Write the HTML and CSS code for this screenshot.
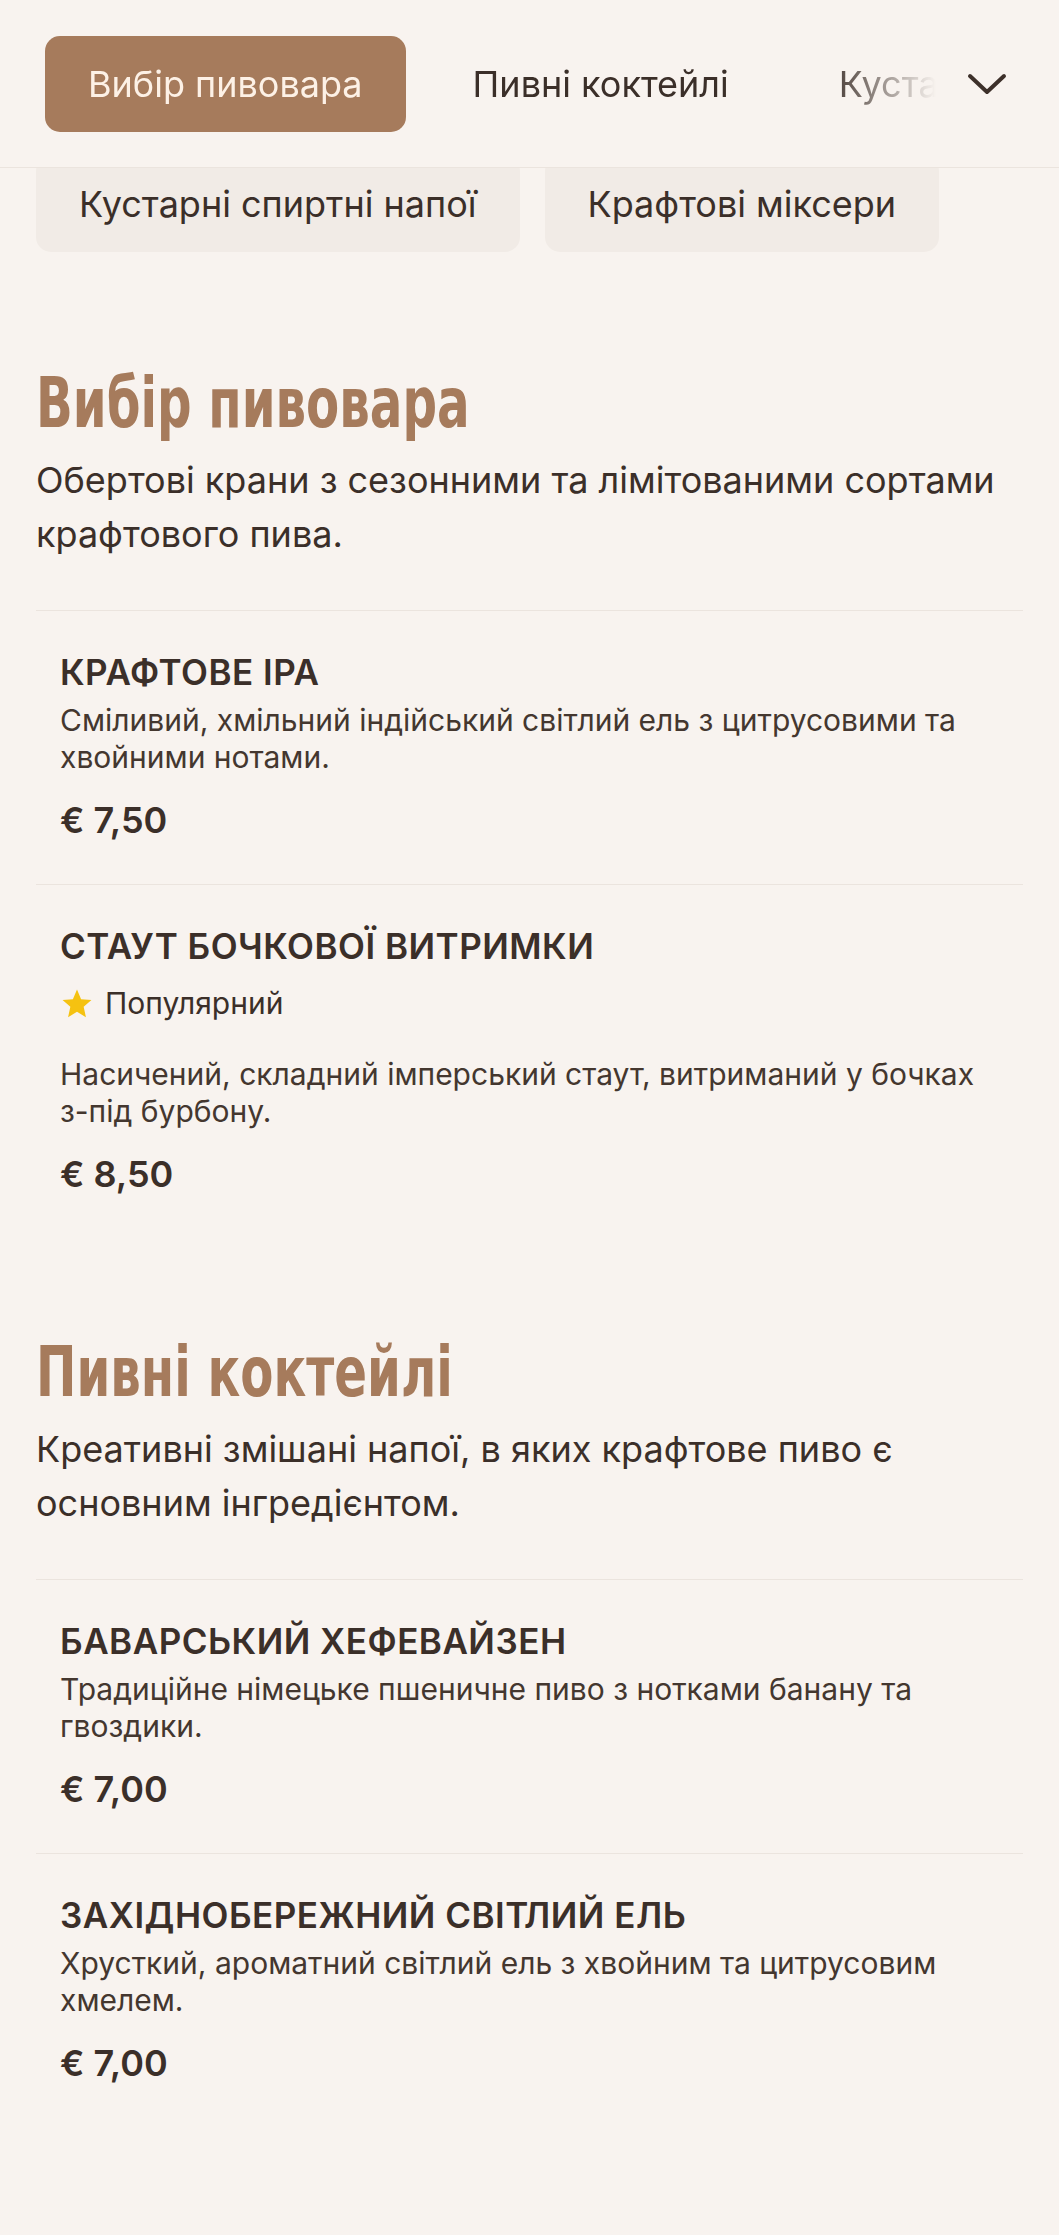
FILE: index.html
```html
<!DOCTYPE html>
<html lang="uk">
<head>
<meta charset="utf-8">
<title>Меню</title>
<link rel="stylesheet" href="styles.css">
</head>
<body>
<header class="header">
  <nav class="tabs">
    <span class="tab tab-active">Вибір пивовара</span>
    <span class="tab">Пивні коктейлі</span>
    <span class="tab">Кустарні спиртні напої</span>
    <span class="tab">Крафтові міксери</span>
  </nav>
  <button class="menu-btn" aria-label="Більше">
    <svg width="40" height="22" viewBox="0 0 40 22" fill="none"><path d="M3 3 L20 19 L37 3" stroke="#3d302a" stroke-width="4" stroke-linecap="round" stroke-linejoin="round"/></svg>
  </button>
</header>
<div class="chips">
  <span class="chip">Кустарні спиртні напої</span>
  <span class="chip">Крафтові міксери</span>
</div>
<main>
  <section class="section">
    <h2 class="section-title">Вибір пивовара</h2>
    <p class="section-desc">Обертові крани з сезонними та лімітованими сортами крафтового пива.</p>
    <div class="items">
      <div class="item">
        <h3 class="item-name">КРАФТОВЕ IPA</h3>
        <p class="item-desc">Сміливий, хмільний індійський світлий ель з цитрусовими та хвойними нотами.</p>
        <div class="item-price">€ 7,50</div>
      </div>
      <div class="item">
        <h3 class="item-name">СТАУТ БОЧКОВОЇ ВИТРИМКИ</h3>
        <div class="tag">
          <svg class="star" width="34" height="34" viewBox="0 0 24 24"><path d="M12 1.8 L14.9 8.6 L22.2 9.2 L16.7 14 L18.3 21.3 L12 17.5 L5.7 21.3 L7.3 14 L1.8 9.2 L9.1 8.6 Z" fill="#f5c211"/></svg>
          <span>Популярний</span>
        </div>
        <p class="item-desc">Насичений, складний імперський стаут, витриманий у бочках з-під бурбону.</p>
        <div class="item-price">€ 8,50</div>
      </div>
    </div>
  </section>
  <section class="section">
    <h2 class="section-title">Пивні коктейлі</h2>
    <p class="section-desc">Креативні змішані напої, в яких крафтове пиво є основним інгредієнтом.</p>
    <div class="items">
      <div class="item">
        <h3 class="item-name">БАВАРСЬКИЙ ХЕФЕВАЙЗЕН</h3>
        <p class="item-desc">Традиційне німецьке пшеничне пиво з нотками банану та гвоздики.</p>
        <div class="item-price">€ 7,00</div>
      </div>
      <div class="item">
        <h3 class="item-name">ЗАХІДНОБЕРЕЖНИЙ СВІТЛИЙ ЕЛЬ</h3>
        <p class="item-desc">Хрусткий, ароматний світлий ель з хвойним та цитрусовим хмелем.</p>
        <div class="item-price">€ 7,00</div>
      </div>
    </div>
  </section>
</main>
</body>
</html>
```
FILE: styles.css
```css
* { box-sizing: border-box; }

html, body {
  margin: 0;
  padding: 0;
}

body {
  background: #f8f3ef;
  color: #3b2f29;
  font-family: Inter, "Noto Sans", sans-serif;
  min-height: 2235px;
}

.header {
  position: relative;
  z-index: 2;
  height: 168px;
  display: flex;
  align-items: center;
  padding: 0 52px 0 45px;
  background: #f8f3ef;
  border-bottom: 1px solid #ebe4de;
}

.tabs {
  flex: 1;
  min-width: 0;
  display: flex;
  gap: 24px;
  overflow: hidden;
  -webkit-mask-image: linear-gradient(to right, #000 calc(100% - 115px), transparent calc(100% - 4px));
  mask-image: linear-gradient(to right, #000 calc(100% - 115px), transparent calc(100% - 4px));
}

.tab {
  flex: none;
  height: 96px;
  padding: 0 43px;
  border-radius: 15px;
  display: flex;
  align-items: center;
  font-size: 36px;
  white-space: nowrap;
  color: #3b2f29;
}

.tab-active {
  background: #a67b5c;
  color: #fdf1e6;
}

.menu-btn {
  flex: none;
  width: 67px;
  height: 60px;
  padding: 0;
  border: 0;
  background: transparent;
  display: flex;
  align-items: center;
  justify-content: flex-end;
}

.chips {
  display: flex;
  gap: 25px;
  padding: 0 36px;
  margin-top: -12px;
  margin-bottom: 10px;
}

.chip {
  height: 96px;
  padding: 0 43px;
  border-radius: 15px;
  background: #f1ebe6;
  display: flex;
  align-items: center;
  font-size: 36px;
  white-space: nowrap;
  color: #3b2f29;
}

.section {
  padding: 100px 36px 0;
}

.section + .section {
  padding-top: 93px;
}

.section-title {
  margin: 0;
  font-family: "DejaVu Sans", sans-serif;
  font-weight: 700;
  font-size: 70px;
  line-height: 82px;
  color: #a67b5c;
  transform: scaleX(0.69);
  transform-origin: left center;
  white-space: nowrap;
}

.section-desc {
  margin: 9px 0 0;
  font-size: 36px;
  line-height: 54px;
  color: #3b2f29;
}

.items {
  margin-top: 49px;
}

.item {
  border-top: 1px solid #ebe4de;
  padding: 40px 24px 42px;
}

.item-name {
  margin: 0;
  font-size: 35px;
  line-height: 42px;
  font-weight: 600;
  letter-spacing: 0.5px;
  color: #3b2f29;
}

.item-desc {
  margin: 9px 0 0;
  font-size: 30px;
  line-height: 37px;
  color: #44372f;
}

.tag {
  margin: 18px 0 34px;
  display: flex;
  align-items: center;
  gap: 11px;
  font-size: 30px;
  line-height: 37px;
  color: #3b2f29;
}

.star {
  display: block;
  flex: none;
}

.item-price {
  margin-top: 22px;
  font-size: 36px;
  line-height: 44px;
  font-weight: 600;
  color: #3b2f29;
}
```
